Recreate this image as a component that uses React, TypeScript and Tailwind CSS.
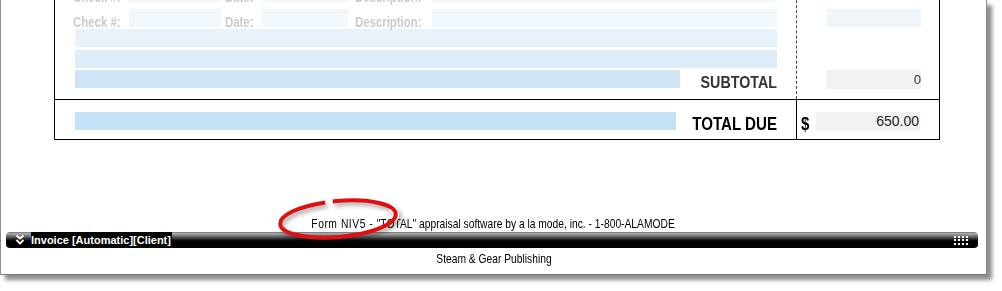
import React from "react";

const sans = "font-['Liberation_Sans',Arial,sans-serif]";

function Label({ text, w, ml }: { text: string; w: string; ml: string }) {
  return (
    <div className={`${w} ${ml} h-[18px] shrink-0 whitespace-nowrap`}>
      <span className={`${sans} inline-block origin-left scale-x-[0.76] text-[15px] font-bold leading-[19px] text-[#cbcbcb]`}>{text}</span>
    </div>
  );
}

function CheckRow() {
  return (
    <div className="flex h-[18px] items-start">
      <Label text="Check #:" w="w-[56px]" ml="-ml-[2px]" />
      <div className="h-[18px] w-[92px] bg-[#f2f7fc]" />
      <Label text="Date:" w="w-[37px]" ml="ml-[4px]" />
      <div className="h-[18px] w-[86px] bg-[#f2f7fc]" />
      <Label text="Description:" w="w-[77px]" ml="ml-[7px]" />
      <div className="h-[18px] flex-1 bg-[#f2f7fc]" />
    </div>
  );
}

function Chevrons() {
  return (
    <svg width="10" height="12" viewBox="0 0 10 12" className="shrink-0">
      <polyline points="1.5,1.5 5,4.5 8.5,1.5" fill="none" stroke="#fff" strokeWidth="1.8" />
      <polyline points="1.5,6 5,9.5 8.5,6" fill="none" stroke="#fff" strokeWidth="1.8" />
    </svg>
  );
}

function Dots() {
  return (
    <div className="grid grid-cols-4 gap-x-[2px] gap-y-[1.5px]">
      {Array.from({ length: 12 }).map((_, i) => (
        <div key={i} className="h-[2px] w-[2px] bg-white" />
      ))}
    </div>
  );
}

export default function App() {
  return (
    <div className="h-[291px] w-[1002px] overflow-hidden bg-white">
      <div className="relative flow-root h-[275px] w-[987px] border-x border-b border-x-[#8c8c8c] border-b-[#7a7a7a] bg-white shadow-[5px_5px_4px_rgba(0,0,0,0.45)]">
        {/* form box */}
        <div className="-mt-[20px] ml-[53px] w-[886px] border-x border-b border-black">
          <div className="flex h-[119px]">
            <div className="w-[741px] pl-[20px] pr-[19px] pt-[4px]">
              <div className="mb-[7px]">
                <CheckRow />
              </div>
              <div className="mb-[2px]">
                <CheckRow />
              </div>
              <div className="mb-[3px] h-[18px] bg-[#e7f2fb]" />
              <div className="mb-[2px] h-[18px] bg-[#dcecf9]" />
              <div className="flex h-[18px] items-start">
                <div className="h-[18px] w-[605px] bg-[#d0e6f7]" />
                <div className="flex-1 text-right whitespace-nowrap">
                  <span className={`${sans} inline-block origin-right scale-x-[0.84] text-[17px] font-bold leading-[22px] text-[#333]`}>SUBTOTAL</span>
                </div>
              </div>
            </div>
            <div className="flex-1 border-l border-dashed border-[#444] pt-[29px]">
              <div className="ml-[30px] h-[18px] w-[94px] bg-[#eef5fb]" />
              <div className={`${sans} ml-[29px] mt-[43px] h-[19px] w-[95px] bg-[#f2f2f2] text-right text-[13px] leading-[19px] text-[#333]`}>
                0
              </div>
            </div>
          </div>
          <div className="flex h-[40px] border-t border-black">
            <div className="flex w-[741px] items-start pl-[20px] pr-[19px] pt-[12px]">
              <div className="h-[18px] w-[605px] bg-[#c4e1f6]" />
              <div className="flex-1 text-right whitespace-nowrap">
                <span className={`${sans} inline-block origin-right scale-x-[0.84] text-[18px] font-bold leading-[14px] text-black`}>TOTAL DUE</span>
              </div>
            </div>
            <div className="flex flex-1 items-start border-l border-black pl-[4px] pt-[12px]">
              <div className="w-[15px]">
                <span className={`${sans} inline-block origin-left scale-x-[0.84] text-[18px] font-bold leading-[14px] text-black`}>$</span>
              </div>
              <div className={`${sans} h-[19px] w-[104px] bg-[#f2f2f2] pr-[1px] text-right text-[14px] leading-[19px] text-[#222]`}>
                650.00
              </div>
            </div>
          </div>
        </div>

        {/* footer */}
        <div className="mt-[77px] flex h-[14px] justify-center whitespace-nowrap">
          <span className={`${sans} inline-block scale-x-[0.79] text-[13px] leading-[14px] text-black`}>
            <span className="tracking-[0.7px]">Form NIV5 - </span>"TOTAL" appraisal software by a la mode, inc. - 1-800-ALAMODE
          </span>
        </div>
        <div className="ml-[5px] mt-[1px] flex h-[16px] w-[972px] items-center rounded-[4px] bg-[linear-gradient(to_bottom,#505050_0px,#b4b4b4_1px,#8c8c8c_3px,#2c2c2c_7px,#000_9px)] pr-[10px]">
          <div className="flex h-[16px] w-[25px] items-center justify-center rounded-l-[4px] pl-[3px]">
            <Chevrons />
          </div>
          <span className={`${sans} h-[16px] bg-black pr-[1px] text-[11px] font-bold leading-[16px] text-white`}>
            Invoice [Automatic][Client]
          </span>
          <div className="flex-1" />
          <Dots />
        </div>
        <div className="mt-[4px] flex h-[14px] justify-center whitespace-nowrap">
          <span className={`${sans} inline-block scale-x-[0.79] text-[13px] leading-[14px] text-black`}>
            Steam &amp; Gear Publishing
          </span>
        </div>

        {/* red annotation ring */}
        <svg
          className="absolute left-[269px] top-[190px] h-[64px] w-[140px] drop-shadow-[2px_3px_2px_rgba(0,0,0,0.35)]"
          viewBox="0 0 140 64"
        >
          <ellipse
            cx="68"
            cy="29"
            rx="58"
            ry="18"
            transform="rotate(-5 68 29)"
            fill="none"
            stroke="#ffffff"
            strokeWidth="7"
            pathLength={100}
            strokeDasharray="2.5 94 3.5"
          />
          <ellipse
            cx="68"
            cy="29"
            rx="58"
            ry="18"
            transform="rotate(-5 68 29)"
            fill="none"
            stroke="#e01010"
            strokeWidth="4"
            pathLength={100}
            strokeDasharray="70.5 3 26.5"
          />
        </svg>
      </div>
    </div>
  );
}
